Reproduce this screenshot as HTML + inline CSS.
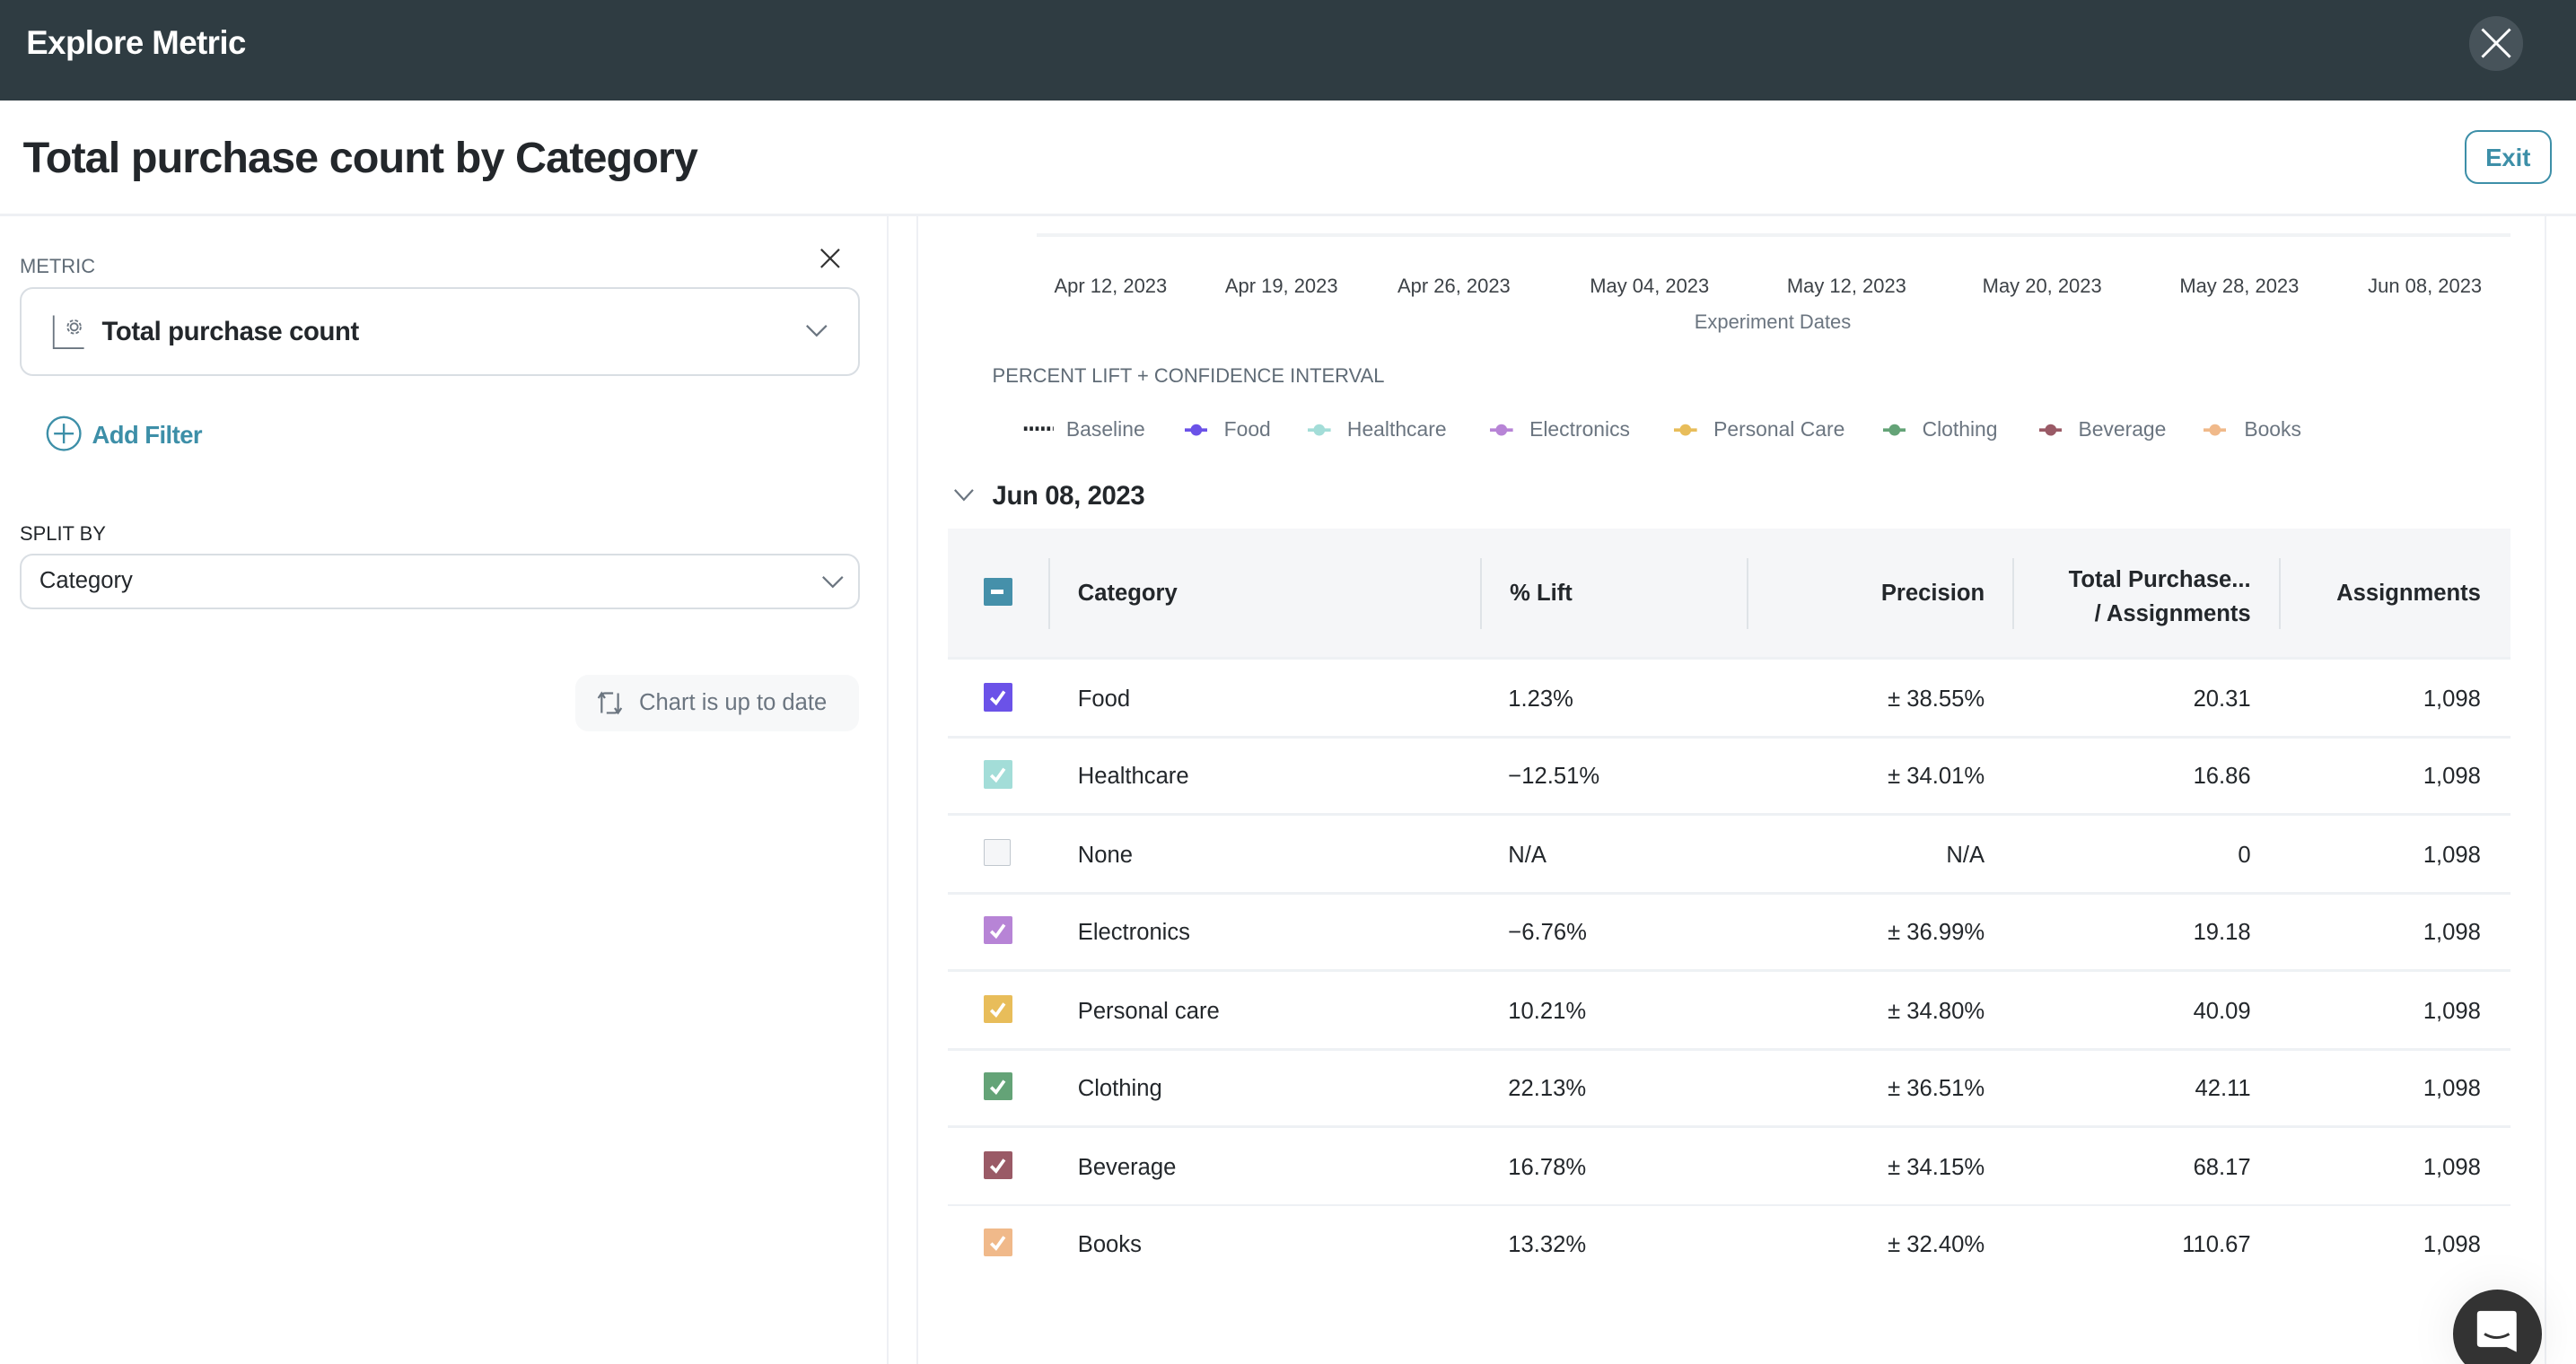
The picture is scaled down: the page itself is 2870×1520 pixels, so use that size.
<!DOCTYPE html>
<html><head><meta charset="utf-8"><style>
html,body{margin:0;padding:0;background:#fff;overflow:hidden}
body{width:2870px;height:1520px}
#r{position:relative;width:1568px;height:831px;zoom:1.8304;font-family:"Liberation Sans",sans-serif;color:#23272b}
.a{position:absolute;white-space:nowrap}
.hd{left:0;top:0;width:1568px;height:61px;background:#2f3c42}
.lab{font-size:12px;color:#5f6b76}
.box{border:1.5px solid #d9dee3;border-radius:8px;background:#fff}
.ax{font-size:12px;color:#3d4247;transform:translateX(-50%)}
.lg{font-size:12.5px;color:#6b7580;top:254px}
.dot{position:absolute;top:257px;width:14px;height:10px}
.th{font-size:14px;font-weight:bold;color:#23272b;margin-top:1.5px}
.td{font-size:14px;color:#23272b;margin-top:2px}
.cb{position:absolute;left:599px;width:17px;height:17px;border-radius:1px}
.vl{position:absolute;width:1px;background:#dfe3e7}
.hl{position:absolute;left:577px;width:951px;height:1.5px;background:#eef1f4}
</style></head><body><div id="r">
<div class="a hd"></div>
<div class="a" style="left:16px;top:15px;font-size:20px;font-weight:bold;color:#fff;letter-spacing:-0.3px">Explore Metric</div>
<div class="a" style="left:1503px;top:10px;width:33px;height:33px;border-radius:50%;background:#47535a"></div>
<svg class="a" style="left:1508px;top:15px" width="23" height="23" viewBox="0 0 23 23"><path d="M3 3L20 20M20 3L3 20" stroke="#fff" stroke-width="1.6"/></svg>

<div class="a" style="left:14px;top:81px;font-size:26.5px;font-weight:bold;letter-spacing:-0.5px">Total purchase count by Category</div>
<div class="a" style="left:1500px;top:79px;width:51px;height:31px;border:1.5px solid #3d8fa8;border-radius:8px;color:#3d8fa8;font-weight:bold;font-size:15px;text-align:center;line-height:32px">Exit</div>
<div class="a" style="left:0;top:130px;width:1568px;height:1.5px;background:#eef0f4"></div>
<div class="vl" style="left:540px;top:131px;height:700px;background:#eef0f4"></div>
<div class="vl" style="left:558px;top:131px;height:700px;background:#eef0f4"></div>
<div class="vl" style="left:1549px;top:131px;height:700px;background:#eef0f4"></div>

<div class="a lab" style="left:12px;top:155px">METRIC</div>
<svg class="a" style="left:499px;top:151px" width="13" height="13"><path d="M1 1L12 12M12 1L1 12" stroke="#333" stroke-width="1.2"/></svg>
<div class="a box" style="left:12px;top:175px;width:509px;height:52px"></div>
<svg class="a" style="left:31px;top:189px" width="24" height="26" viewBox="0 0 24 26"><path d="M1.5 3V23H20" stroke="#6b7580" fill="none" stroke-width="1"/><circle cx="14" cy="10" r="2.2" stroke="#6b7580" fill="none" stroke-width="1"/><circle cx="14" cy="10" r="4" stroke="#6b7580" fill="none" stroke-width="1" stroke-dasharray="2 1.2"/></svg>
<div class="a" style="left:62px;top:193px;font-size:16px;font-weight:bold;letter-spacing:-0.2px">Total purchase count</div>
<svg class="a" style="left:490px;top:197px" width="14" height="9"><path d="M1 1L7 7L13 1" stroke="#6b7580" fill="none" stroke-width="1.2"/></svg>

<svg class="a" style="left:28px;top:253px" width="22" height="22"><circle cx="11" cy="11" r="10" stroke="#3d8fa8" fill="none" stroke-width="1.3"/><path d="M11 5V17M5 11H17" stroke="#3d8fa8" stroke-width="1.3"/></svg>
<div class="a" style="left:56px;top:256px;font-size:15px;font-weight:bold;color:#3d8fa8;letter-spacing:-0.3px">Add Filter</div>

<div class="a" style="left:12px;top:318px;font-size:12px;color:#23272b">SPLIT BY</div>
<div class="a box" style="left:12px;top:337px;width:509px;height:32px"></div>
<div class="a" style="left:24px;top:346px;font-size:14px">Category</div>
<svg class="a" style="left:500px;top:350px" width="14" height="9"><path d="M1 1L7 7L13 1" stroke="#6b7580" fill="none" stroke-width="1.2"/></svg>

<div class="a" style="left:350px;top:411px;width:173px;height:34px;background:#f7f8f9;border-radius:8px"></div>
<svg class="a" style="left:362px;top:419px" width="18" height="18" viewBox="0 0 18 18"><path d="M4 15V5Q4 3 6 3H11M2 6L4 3L6 6M14 3V13Q14 15 12 15H7M12 12L14 15L16 12" stroke="#6b7580" fill="none" stroke-width="1.2"/></svg>
<div class="a" style="left:389px;top:420px;font-size:14px;color:#6b7580">Chart is up to date</div>

<div class="a" style="left:631px;top:142px;width:897px;height:2px;background:#f1f3f5"></div>
<div class="a ax" style="left:676px;top:167px">Apr 12, 2023</div>
<div class="a ax" style="left:780px;top:167px">Apr 19, 2023</div>
<div class="a ax" style="left:885px;top:167px">Apr 26, 2023</div>
<div class="a ax" style="left:1004px;top:167px">May 04, 2023</div>
<div class="a ax" style="left:1124px;top:167px">May 12, 2023</div>
<div class="a ax" style="left:1243px;top:167px">May 20, 2023</div>
<div class="a ax" style="left:1363px;top:167px">May 28, 2023</div>
<div class="a ax" style="left:1476px;top:167px">Jun 08, 2023</div>
<div class="a ax" style="left:1079px;top:189px;color:#6b7580">Experiment Dates</div>

<div class="a lab" style="left:604px;top:222px">PERCENT LIFT + CONFIDENCE INTERVAL</div>
<svg class="a" style="left:622px;top:259px" width="20" height="4"><path d="M1 2H19" stroke="#23272b" stroke-width="2.5" stroke-dasharray="2 1.5"/></svg>
<div class="a lg" style="left:649px">Baseline</div>
<svg class="dot" style="left:721px"><path d="M0 5H14" stroke="#6b52e8" stroke-width="2"/><circle cx="7" cy="5" r="3.5" fill="#6b52e8"/></svg><div class="a lg" style="left:745px">Food</div>
<svg class="dot" style="left:796px"><path d="M0 5H14" stroke="#a3ddd8" stroke-width="2"/><circle cx="7" cy="5" r="3.5" fill="#a3ddd8"/></svg><div class="a lg" style="left:820px">Healthcare</div>
<svg class="dot" style="left:907px"><path d="M0 5H14" stroke="#b784d6" stroke-width="2"/><circle cx="7" cy="5" r="3.5" fill="#b784d6"/></svg><div class="a lg" style="left:931px">Electronics</div>
<svg class="dot" style="left:1019px"><path d="M0 5H14" stroke="#e8bd5a" stroke-width="2"/><circle cx="7" cy="5" r="3.5" fill="#e8bd5a"/></svg><div class="a lg" style="left:1043px">Personal Care</div>
<svg class="dot" style="left:1146px"><path d="M0 5H14" stroke="#64a377" stroke-width="2"/><circle cx="7" cy="5" r="3.5" fill="#64a377"/></svg><div class="a lg" style="left:1170px">Clothing</div>
<svg class="dot" style="left:1241px"><path d="M0 5H14" stroke="#9a5a66" stroke-width="2"/><circle cx="7" cy="5" r="3.5" fill="#9a5a66"/></svg><div class="a lg" style="left:1265px">Beverage</div>
<svg class="dot" style="left:1341px"><path d="M0 5H14" stroke="#f0b98a" stroke-width="2"/><circle cx="7" cy="5" r="3.5" fill="#f0b98a"/></svg><div class="a lg" style="left:1366px">Books</div>

<svg class="a" style="left:580px;top:297px" width="13" height="9"><path d="M1 1L6.5 7L12 1" stroke="#6b7580" fill="none" stroke-width="1.2"/></svg>
<div class="a" style="left:604px;top:293px;font-size:16px;font-weight:bold;letter-spacing:-0.2px">Jun 08, 2023</div>

<div class="a" style="left:577px;top:322px;width:951px;height:78px;background:#f5f6f8"></div>
<div class="cb" style="top:352px;background:#4590aa"></div>
<div class="a" style="left:603px;top:359px;width:8px;height:2.5px;background:#fff"></div>
<div class="vl" style="left:638px;top:340px;height:43px"></div>
<div class="vl" style="left:901px;top:340px;height:43px"></div>
<div class="vl" style="left:1063px;top:340px;height:43px"></div>
<div class="vl" style="left:1225px;top:340px;height:43px"></div>
<div class="vl" style="left:1387px;top:340px;height:43px"></div>
<div class="a th" style="left:656px;top:352px">Category</div>
<div class="a th" style="left:919px;top:352px">% Lift</div>
<div class="a th" style="right:360px;top:352px">Precision</div>
<div class="a th" style="right:198px;top:341px;text-align:right;line-height:21px">Total Purchase...<br>/ Assignments</div>
<div class="a th" style="right:58px;top:352px">Assignments</div>
<div class="hl" style="top:400px"></div>

<div class="hl" style="top:448px"></div><div class="hl" style="top:495px"></div><div class="hl" style="top:543px"></div><div class="hl" style="top:590px"></div><div class="hl" style="top:638px"></div><div class="hl" style="top:685px"></div><div class="hl" style="top:733px"></div>

<div class="cb" style="top:416px;background:#6b52e8"></div>
<div class="cb" style="top:463px;background:#a3ddd8"></div>
<div class="cb" style="top:511px;width:15px;height:15px;background:#f5f6f8;border:1px solid #c0c7ce"></div>
<div class="cb" style="top:558px;background:#b784d6"></div>
<div class="cb" style="top:606px;background:#e8bd5a"></div>
<div class="cb" style="top:653px;background:#64a377"></div>
<div class="cb" style="top:701px;background:#9a5a66"></div>
<div class="cb" style="top:748px;background:#f0b98a"></div>
<svg class="a" style="left:599px;top:0" width="17" height="770"><g stroke="#fff" stroke-width="2" fill="none"><path d="M4.5 425L7.5 428L12.5 421"/><path d="M4.5 472L7.5 475L12.5 468"/><path d="M4.5 567L7.5 570L12.5 563"/><path d="M4.5 615L7.5 618L12.5 611"/><path d="M4.5 662L7.5 665L12.5 658"/><path d="M4.5 710L7.5 713L12.5 706"/><path d="M4.5 757L7.5 760L12.5 753"/></g></svg>

<div class="a td" style="left:656px;top:416px">Food</div><div class="a td" style="left:918px;top:416px">1.23%</div><div class="a td" style="right:360px;top:416px">± 38.55%</div><div class="a td" style="right:198px;top:416px">20.31</div><div class="a td" style="right:58px;top:416px">1,098</div>
<div class="a td" style="left:656px;top:463px">Healthcare</div><div class="a td" style="left:918px;top:463px">−12.51%</div><div class="a td" style="right:360px;top:463px">± 34.01%</div><div class="a td" style="right:198px;top:463px">16.86</div><div class="a td" style="right:58px;top:463px">1,098</div>
<div class="a td" style="left:656px;top:511px">None</div><div class="a td" style="left:918px;top:511px">N/A</div><div class="a td" style="right:360px;top:511px">N/A</div><div class="a td" style="right:198px;top:511px">0</div><div class="a td" style="right:58px;top:511px">1,098</div>
<div class="a td" style="left:656px;top:558px">Electronics</div><div class="a td" style="left:918px;top:558px">−6.76%</div><div class="a td" style="right:360px;top:558px">± 36.99%</div><div class="a td" style="right:198px;top:558px">19.18</div><div class="a td" style="right:58px;top:558px">1,098</div>
<div class="a td" style="left:656px;top:606px">Personal care</div><div class="a td" style="left:918px;top:606px">10.21%</div><div class="a td" style="right:360px;top:606px">± 34.80%</div><div class="a td" style="right:198px;top:606px">40.09</div><div class="a td" style="right:58px;top:606px">1,098</div>
<div class="a td" style="left:656px;top:653px">Clothing</div><div class="a td" style="left:918px;top:653px">22.13%</div><div class="a td" style="right:360px;top:653px">± 36.51%</div><div class="a td" style="right:198px;top:653px">42.11</div><div class="a td" style="right:58px;top:653px">1,098</div>
<div class="a td" style="left:656px;top:701px">Beverage</div><div class="a td" style="left:918px;top:701px">16.78%</div><div class="a td" style="right:360px;top:701px">± 34.15%</div><div class="a td" style="right:198px;top:701px">68.17</div><div class="a td" style="right:58px;top:701px">1,098</div>
<div class="a td" style="left:656px;top:748px">Books</div><div class="a td" style="left:918px;top:748px">13.32%</div><div class="a td" style="right:360px;top:748px">± 32.40%</div><div class="a td" style="right:198px;top:748px">110.67</div><div class="a td" style="right:58px;top:748px">1,098</div>

<div class="a" style="left:1493px;top:785px;width:54px;height:54px;border-radius:50%;background:#333;box-shadow:0 0 30px rgba(0,0,0,0.08)"></div>
<svg class="a" style="left:1507px;top:797px" width="26" height="28" viewBox="0 0 26 28"><path d="M3 1H23Q25 1 25 3V26L19 23H3Q1 23 1 21V3Q1 1 3 1Z" fill="#fff"/><path d="M5.5 15Q13 19.5 20.5 15" stroke="#333" stroke-width="1.6" fill="none"/></svg>
</div></body></html>
